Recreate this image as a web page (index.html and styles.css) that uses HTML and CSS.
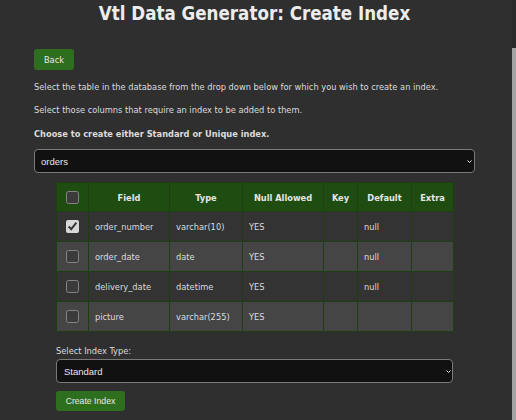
FILE: index.html
```
<!DOCTYPE html>
<html>
<head>
<meta charset="utf-8">
<title>Vtl Data Generator: Create Index</title>
<link rel="stylesheet" href="styles.css">
</head>
<body>
<div class="page">
  <h1 class="title">Vtl Data Generator: Create Index</h1>
  <div class="toolbar"><button class="btn btn-back">Back</button></div>
  <p class="intro first">Select the table in the database from the drop down below for which you wish to create an index.</p>
  <p class="intro">Select those columns that require an index to be added to them.</p>
  <p class="intro strong">Choose to create either Standard or Unique index.</p>
  <div class="select-wrap select-table">
    <select class="select"><option>orders</option></select>
    <svg class="chev" width="5" height="3" viewBox="0 0 5 3"><path d="M0.5 0.5 L2.5 2.5 L4.5 0.5" fill="none" stroke="#e8e8e8" stroke-width="1"/></svg>
  </div>
  <div class="inner">
    <table class="fields">
      <colgroup>
        <col class="c-check"><col class="c-field"><col class="c-type"><col class="c-null"><col class="c-key"><col class="c-default"><col class="c-extra">
      </colgroup>
      <thead>
        <tr><th><input type="checkbox" class="cb"></th><th>Field</th><th>Type</th><th>Null Allowed</th><th>Key</th><th>Default</th><th>Extra</th></tr>
      </thead>
      <tbody>
        <tr><td class="chk"><input type="checkbox" class="cb" checked></td><td>order_number</td><td>varchar(10)</td><td>YES</td><td></td><td>null</td><td></td></tr>
        <tr><td class="chk"><input type="checkbox" class="cb"></td><td>order_date</td><td>date</td><td>YES</td><td></td><td>null</td><td></td></tr>
        <tr><td class="chk"><input type="checkbox" class="cb"></td><td>delivery_date</td><td>datetime</td><td>YES</td><td></td><td>null</td><td></td></tr>
        <tr><td class="chk"><input type="checkbox" class="cb"></td><td>picture</td><td>varchar(255)</td><td>YES</td><td></td><td></td><td></td></tr>
      </tbody>
    </table>
    <label class="label">Select Index Type:</label>
    <div class="select-wrap select-type">
      <select class="select"><option>Standard</option><option>Unique</option></select>
      <svg class="chev" width="5" height="3" viewBox="0 0 5 3"><path d="M0.5 0.5 L2.5 2.5 L4.5 0.5" fill="none" stroke="#e8e8e8" stroke-width="1"/></svg>
    </div>
    <div class="toolbar create"><button class="btn btn-create">Create Index</button></div>
  </div>
</div>
<div class="scrollbar"><div class="thumb"></div></div>
</body>
</html>
```
FILE: styles.css
```
html{color-scheme:dark}
body{margin:0;background:#2f2f2f;color:#dcdcdc;font-family:"DejaVu Sans Condensed","DejaVu Sans",sans-serif;font-size:9.2px;overflow:hidden}
.page{padding:0 41px 0 34px;display:flex;flex-direction:column}
.title{margin:0;font-size:18.6px;font-weight:bold;line-height:28px;text-align:center;color:#ececec}
.toolbar{display:flex}
.btn{border:none;border-radius:3px;background:#2d6e1f;color:#e8e8e8;height:21px;padding:0;cursor:pointer}
.btn-back{margin-top:20.5px;width:40px;font-family:"DejaVu Sans Condensed","DejaVu Sans",sans-serif;font-size:9.2px}
.intro{margin:9.5px 0 0;line-height:14px}
.intro.first{margin-top:10px}
.strong{font-weight:bold}
.select-wrap{position:relative}
.select{display:block;width:100%;height:24px;appearance:none;-webkit-appearance:none;background:#111;color:#e6e6e6;border:1px solid #7a7a7a;border-radius:4px;font-family:"Liberation Sans",Arial,sans-serif;font-size:9.5px;padding:0 14px 0 6px}
.chev{position:absolute;right:3px;top:10.5px}
.select-table{margin-top:8.5px;width:441px}
.inner{width:397px;margin:9px auto 0;display:flex;flex-direction:column}
.fields{border-collapse:collapse;table-layout:fixed;width:397px;border:1px solid #1d3d12}
.c-check{width:32px}.c-field{width:81px}.c-type{width:73px}.c-null{width:81px}.c-key{width:34px}.c-default{width:54px}.c-extra{width:42px}
.fields th,.fields td{border:1px solid #1d3d12;padding:0 6px;text-align:left;white-space:nowrap;overflow:hidden}
.fields th{background:#1f4c11;height:28px;font-weight:bold;text-align:center;color:#e6e6e6;padding:0}
.fields td{height:29px;color:#dcdcdc}
.fields tbody tr:nth-child(odd) td{background:#333}
.fields tbody tr:nth-child(even) td{background:#454545}
.fields td.chk{padding:0;text-align:center}
.cb{margin:0;width:13px;height:13px;vertical-align:middle;accent-color:#d8d8d8}
.label{margin-top:11.5px;line-height:14px}
.select-type{margin-top:1.5px;width:397px}
.select-type .select{padding-left:7px}
.select-type .chev{right:2px}
.create{margin-top:7.5px}
.btn-create{width:69px;height:20px;font-family:"Liberation Sans",Arial,sans-serif;font-size:8.7px}
.scrollbar{position:fixed;top:0;right:0;width:4px;height:100%;background:#2a2a2a}
.thumb{position:absolute;top:48px;bottom:0;left:0;right:0;background:#a3a3a3}
```
